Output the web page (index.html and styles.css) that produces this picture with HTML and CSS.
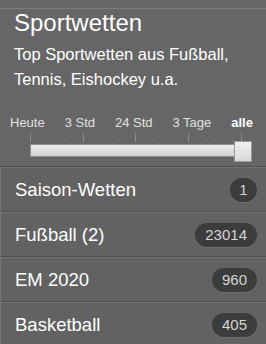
FILE: index.html
```html
<!DOCTYPE html>
<html lang="de">
<head>
<meta charset="utf-8">
<link rel="stylesheet" href="styles.css">
</head>
<body>
<div class="panel">
  <div class="head">
    <h1 class="title">Sportwetten</h1>
    <p class="desc">Top Sportwetten aus Fußball, Tennis, Eishockey u.a.</p>
  </div>
  <div class="filter">
    <div class="labels">
      <span class="lab">Heute</span>
      <span class="lab">3 Std</span>
      <span class="lab">24 Std</span>
      <span class="lab">3 Tage</span>
      <span class="lab active">alle</span>
    </div>
    <div class="slider">
      <div class="ticks">
        <span class="tick major"></span><span class="tick"></span><span class="tick"></span><span class="tick"></span><span class="tick"></span><span class="tick"></span>
        <span class="tick major"></span><span class="tick"></span><span class="tick"></span><span class="tick"></span><span class="tick"></span><span class="tick"></span>
        <span class="tick major"></span><span class="tick"></span><span class="tick"></span><span class="tick"></span><span class="tick"></span><span class="tick"></span>
        <span class="tick major"></span><span class="tick"></span><span class="tick"></span><span class="tick"></span><span class="tick"></span><span class="tick"></span>
        <span class="tick major"></span>
      </div>
      <div class="track"></div>
      <div class="handle"></div>
    </div>
  </div>
  <ul class="list">
    <li class="item"><span class="name">Saison-Wetten</span><span class="badge round">1</span></li>
    <li class="item"><span class="name">Fußball (2)</span><span class="badge">23014</span></li>
    <li class="item"><span class="name">EM 2020</span><span class="badge">960</span></li>
    <li class="item"><span class="name">Basketball</span><span class="badge">405</span></li>
  </ul>
</div>
</body>
</html>
```
FILE: styles.css
```css
html, body {
  margin: 0;
  padding: 0;
  background: #666666;
  width: 266px;
  height: 344px;
  overflow: hidden;
}
body {
  font-family: "Liberation Sans", Arial, sans-serif;
  color: #fff;
}
.panel {
  border-top: 1px solid #7c7c7c;
  margin-top: 8px;
}
.head {
  padding: 0 8px 0 14px;
}
.title {
  margin: 0;
  font-size: 24px;
  font-weight: normal;
  line-height: 27px;
}
.desc {
  margin: 6px 0 0;
  font-size: 16.5px;
  line-height: 25px;
  color: #fff;
}
.filter {
  margin-top: 23px;
}
.labels {
  display: flex;
  justify-content: space-between;
  padding: 0 13px 0 10px;
  font-size: 13px;
  line-height: 15px;
  color: #e0e0e0;
}
.lab.active {
  color: #fff;
  font-weight: bold;
}
.slider {
  position: relative;
  margin: 3px 0 0 30px;
  width: 222px;
  height: 24px;
}
.ticks {
  display: flex;
  justify-content: space-between;
  align-items: flex-start;
  width: 212px;
  height: 11px;
}
.tick {
  width: 1px;
  height: 1px;
  margin-top: 7px;
  background: #8c8c8c;
}
.tick.major {
  height: 9px;
  margin-top: 0;
}
.track {
  width: 208px;
  height: 11px;
  border: 1px solid #909090;
  background: linear-gradient(#ececec, #d2d2d2);
}
.handle {
  position: absolute;
  left: 204px;
  top: 8px;
  width: 16px;
  height: 19px;
  border: 1px solid #9c9c9c;
  background: linear-gradient(#f0f0f0, #d8d8d8);
}
.list {
  list-style: none;
  margin: 9px 0 0;
  padding: 0;
  border-top: 1px solid #4e4e4e;
}
.item {
  display: flex;
  align-items: center;
  justify-content: space-between;
  height: 43px;
  padding: 0 9px 0 14px;
  background: #626262;
  border-top: 1px solid #727272;
  border-bottom: 1px solid #4e4e4e;
  border-left: 1px solid #757575;
  font-size: 18.5px;
}
.name {
  color: #fff;
}
.badge {
  background: #3c3c3c;
  color: #d4d4d4;
  font-size: 15px;
  line-height: 24px;
  height: 24px;
  padding: 0 10px;
  border-radius: 12px;
  box-shadow: 0 1px 1px #707070;
}
.badge.round {
  padding: 0;
  width: 27px;
  text-align: center;
}
```
